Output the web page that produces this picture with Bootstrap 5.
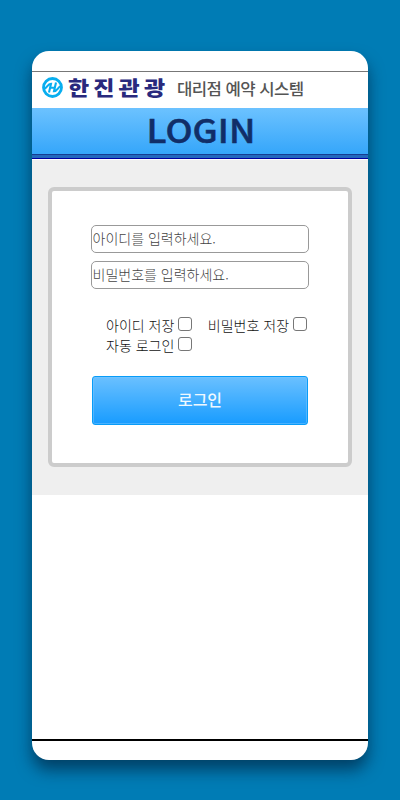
<!DOCTYPE html>
<html lang="ko">
<head>
<meta charset="utf-8">
<meta name="viewport" content="width=device-width, initial-scale=1">
<title>LOGIN</title>
<link href="https://cdn.jsdelivr.net/npm/bootstrap@5.3.0/dist/css/bootstrap.min.css" rel="stylesheet">
<style>
body{background:#007cb5;height:800px;overflow:hidden;padding:51px 32px 40px;font-family:"Noto Sans CJK KR",sans-serif}
.phone{height:709px;border-radius:17px;background:#fff;box-shadow:0 10px 16px rgba(0,25,50,.6)}
.statusbar{height:21px;border-bottom:1px solid #777}
.brandbar{height:36px;padding:0 0 0 10px}
.brandbar svg{width:21px;height:21px;margin-top:-5px}
.brandname{font-size:20px;font-weight:900;line-height:36px;color:#29297d;width:97px;margin-left:5px;letter-spacing:3.6px;white-space:nowrap;margin-top:-5px;transform:scaleX(1.15);transform-origin:left}
.system{font-size:16px;font-weight:500;line-height:36px;color:#555;margin-left:12px;letter-spacing:-.55px;white-space:nowrap;margin-top:-4px;transform:scaleX(1.045);transform-origin:left}
.titlebar{height:52px;background:linear-gradient(#6cc2ff,#35a6fa 46px,#163d91 46px,#163d91 47px,#2468bd 47px,#2468bd 50px,#0000a0 50px,#0000a0 51px,#fff 51px)}
.titlebar h1{font:500 33px/42px "Noto Sans CJK KR",sans-serif;color:#112e68;margin:0;-webkit-text-stroke:.5px #112e68;transform:translateX(1px) scaleX(1.09)}
.stage{height:335px;background:#efefef;padding:27px 16px 28px}
.login-card{height:280px;border:4px solid #ccc;border-radius:6px;padding:34px 39px 0}
.login-card .form-control{height:28px;border:1px solid #999;border-radius:5px;padding:0 1px 2px .5px;font-size:14px;color:#555;margin-bottom:8px;line-height:24px}
.login-card .form-control::placeholder{color:#444;font-weight:300;opacity:1}
.checks{padding:18px 0 0 15px;font-size:14px;font-weight:300;line-height:20px;color:#111}
.checks label{height:20px;white-space:nowrap}
.checks .form-check-input{width:14px;height:14px;margin:-3px 0 0 3.5px;border:1px solid #777;border-radius:3px}
.signin{height:49px;margin:21px 1px 0;width:216px;border:1px solid #089cf8;border-radius:3px;background:linear-gradient(#6ac0ff,#189cff);box-shadow:inset 0 0 0 1px rgba(120,198,255,.5);font-size:16px;font-weight:500;line-height:44px;color:#eef8ff;padding:0 0 3px}
.homebar{border-top:2px solid #000;height:21px}
</style>
<script src="https://cdn.jsdelivr.net/npm/bootstrap@5.3.0/dist/js/bootstrap.bundle.min.js"></script>
</head>
<body>
<main class="phone overflow-hidden d-flex flex-column">
<div class="statusbar"></div>
<header class="brandbar d-flex align-items-center">
<svg viewBox="0 0 21 21" fill="none" stroke="#08aeef" aria-hidden="true"><circle cx="10.5" cy="10.5" r="9" stroke-width="2.8"/><path d="M2 12C5 11.5 5.5 6.8 9 6.8L7 15.5M14 5.5L12 14.2C15.5 14.2 16 9.5 19 9M8 10.7h5" stroke-width="2.1"/></svg>
<span class="brandname">한진관광</span><span class="system">대리점 예약 시스템</span>
</header>
<div class="titlebar text-center"><h1>LOGIN</h1></div>
<section class="stage">
<form class="login-card bg-white">
<input class="form-control" type="text" placeholder="아이디를 입력하세요.">
<input class="form-control" type="password" placeholder="비밀번호를 입력하세요.">
<div class="checks">
<div class="d-flex gap-3"><label class="d-flex align-items-center">아이디 저장<input class="form-check-input" type="checkbox"></label><label class="d-flex align-items-center">비밀번호 저장<input class="form-check-input" type="checkbox"></label></div>
<label class="d-flex align-items-center">자동 로그인<input class="form-check-input" type="checkbox"></label>
</div>
<button class="btn signin" type="button">로그인</button>
</form>
</section>
<div class="homebar mt-auto"></div>
</main>
</body>
</html>
